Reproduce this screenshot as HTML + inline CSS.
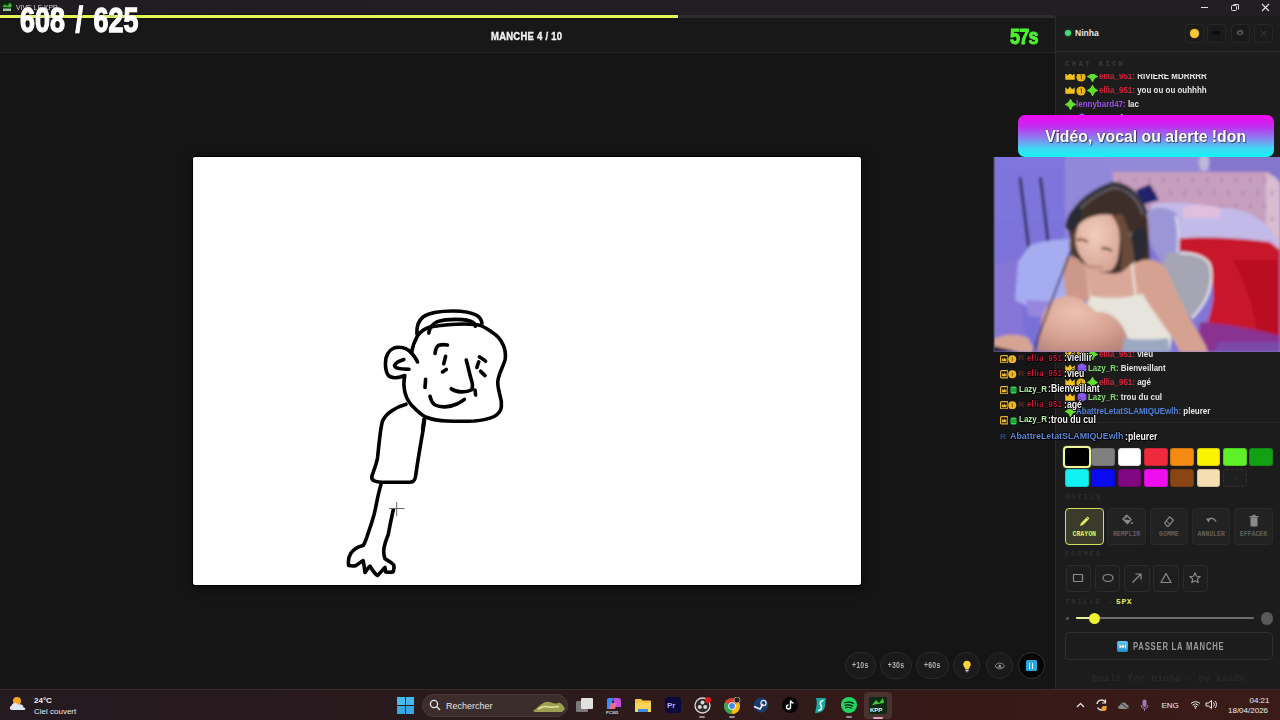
<!DOCTYPE html>
<html><head><meta charset="utf-8">
<style>
*{box-sizing:border-box;margin:0;padding:0}
html,body{width:1280px;height:720px;overflow:hidden;background:#151515;font-family:"Liberation Sans",sans-serif}
.a{position:absolute}
.t{position:absolute;white-space:pre;line-height:1}
</style></head>
<body>
<div class="a" style="left:0;top:0;width:1280px;height:720px;background:#151515"></div>

<!-- title bar -->
<div class="a" style="left:0;top:0;width:1280px;height:16px;background:linear-gradient(90deg,#1f1b1f,#221e24 40%,#211f21)"></div>
<svg class="a" style="left:1px;top:1px" width="12" height="11" viewBox="0 0 12 11"><rect width="12" height="11" rx="1" fill="#0c2410"/><path d="M1 6L4 3L6 5L9 1.5L11 4.5L10 6.5Z" fill="#3fae3a"/><rect x="2" y="7.5" width="8" height="2.5" fill="#cfe8cf" opacity=".8"/></svg>
<div class="t" style="left:15.6px;top:3.6px;font-size:8px;color:#d4d4d4;transform-origin:0 0;transform:scaleX(0.86)">VIVE LE KPP</div>
<!-- window controls -->
<div class="a" style="left:1201px;top:7px;width:7px;height:1.3px;background:#ddd"></div>
<div class="a" style="left:1232.5px;top:3.5px;width:6px;height:6px;border-top:1.1px solid #ddd;border-right:1.1px solid #ddd;border-radius:1.5px"></div><div class="a" style="left:1231px;top:5px;width:6px;height:6px;border:1.2px solid #ddd;border-radius:1.5px;background:#1f1d1f"></div>
<svg class="a" style="left:1261px;top:3px" width="9" height="9"><path d="M1 1L8 8M8 1L1 8" stroke="#e5e5e5" stroke-width="1.1"/></svg>

<!-- game area -->
<div class="a" style="left:0;top:16px;width:1055px;height:673px;background:#151515"></div>
<!-- header -->
<div class="a" style="left:0;top:17px;width:1055px;height:36px;background:#181818;border-bottom:1px solid #262626"></div>
<!-- progress track -->
<div class="a" style="left:0;top:15px;width:1055px;height:3px;background:#2c2c2c;border-top-right-radius:3px"></div>
<div class="a" style="left:0;top:15px;width:678px;height:3px;background:#e4f55a;box-shadow:0 0 2px #000"></div>
<div class="t" id="score" style="left:20px;top:2.5px;font-size:34.5px;font-weight:bold;color:#fff;transform-origin:0 0;transform:scaleX(0.78);word-spacing:4px;-webkit-text-stroke:1.3px #fff;text-shadow:0 1px 2px rgba(0,0,0,.6)">608 / 625</div>
<div class="t" id="manche" style="left:491px;top:31px;font-size:10.5px;font-weight:bold;color:#f0f0f0;letter-spacing:0.3px;transform-origin:0 0;transform:scaleX(0.9);-webkit-text-stroke:0.4px #f0f0f0">MANCHE 4 / 10</div>
<div class="t" id="timer" style="left:1009.5px;top:25.5px;font-size:22.5px;font-weight:bold;color:#4df22e;transform-origin:0 0;transform:scaleX(0.8);letter-spacing:-1px;-webkit-text-stroke:1px #4df22e">57s</div>

<!-- canvas -->
<div class="a" style="left:192px;top:156px;width:670px;height:430px;background:#000;border-radius:3px;box-shadow:0 2px 14px rgba(0,0,0,.45)"></div>
<div class="a" style="left:193px;top:157px;width:668px;height:428px;background:#fff;border-radius:2px"></div>

<svg class="a" style="left:0;top:0" width="1280" height="720"><g fill="none" stroke="#000" stroke-width="3.6" stroke-linecap="round" stroke-linejoin="round"><path d="M406,404.2 C396,407 386,413 382.5,421 C380,430 379,445 377.5,458 C376,466 373,472 371.7,477 C371.5,481 376,482.2 385,482.3 L410,482.3 C414,482 415.2,480 415.8,475 C417.5,462 420.5,445 423.1,430 C423.8,426 424.4,422 424.5,419.5"/><path d="M380.9,484.7 C378,494 376.5,504 374.3,513.7 C371.5,524 368.5,532 366.9,537 C365.5,541 364.5,544 363.1,545.5 C359,546.5 354,549 351,553 C348.5,557 348,562 348.75,565.6 C351,566 354,566.2 356,565.5 C358.5,564 361,561.5 363.1,560.6 C364,564 364.5,569 365,572.5 C366.5,570.5 368.5,567.5 370,566.25 C372,569.5 375,574 377.5,575.6 C380,573 383,569.5 385,567.5 C385.2,569 385.4,570.5 385.6,571.9 C388,572.3 391,572.2 393.1,571.9 C394,569.5 394.2,567 393.75,565 C391.5,562 387.5,560.5 385,558.75 C384,556 383.6,553 383.75,550.6 C384,545 386,540 388.1,535 C389.5,528 391,520 392.3,514.5 C392.7,512.5 393,511 393.3,509.8"/><path d="M417.4,336.1 C414.5,341 412.5,347 411.5,353 C408,349 403,347 398,347.2 C392,347.5 387.5,352 386,358 C385,364 385.5,371 388,375 C391,378.5 398,378.5 404.8,375.5 C404,379 403.8,382 403.9,385 C404.2,391 405,394 406.6,397.5 C409,402 410.5,404.5 412.9,406.6 C417,411 420.5,414.5 425.6,417 C432,419.5 440,420.8 447.3,421 C456,421.3 465,421.3 474.4,421 C482,420.5 489,419 494.2,416.5 C498.5,414 501,410.5 501.4,406.6 C502,401 500.5,397 499.6,393.9 C498.5,389 497.5,385.5 497.8,381.3 C498.5,374 503.5,366 505.1,359.6 C506,354 505,349 503.3,345.2 C500.5,339 496.5,335 492.4,332.5 C489,330 485.5,327.5 481.6,325.8 C474,323.5 465,323.8 456.3,324.2 C446,324.8 437,325.6 429.2,327.3 C424,329 420,332 417.4,336.1"/><path d="M403.8,359.5 C399,361 395.5,363 394.5,365.5 C395,367.5 398,368.5 401,368.8 C404,369 407,369.2 409,369.2"/><path d="M411.5,353 C414,356 416.5,359 417.5,362"/><path d="M416.9,334 C416.5,327 418,321 423,317 C430,312 442,311 452.7,311 C462,311 471,312 477,315.5 C480.5,318 481.9,321 481.9,323.5"/><path d="M428.8,332.9 C429.5,328 432,324 437,321.8 C443,319.8 450,319.4 456.3,319.4 C464,319.4 470,320.5 473.4,322.6 C475,324 475.5,325 475.3,326.2"/><path d="M435,353.5 C435.5,349.5 436.5,346.5 438.75,345.3 C441.5,344.5 445,344.6 447.5,345"/><path d="M445.6,356.3 C445,359 444.3,361.5 443.75,363.75"/><path d="M442.5,371.9 C443.8,371 445,370.2 446.25,369.4"/><path d="M479.4,356.9 C481.5,358.2 483.8,359.6 485.6,361.25"/><path d="M478.75,361.9 C478,363.8 477.4,365.6 476.9,367.5"/><path d="M480.6,371.25 C482,372.8 483.5,374.2 485,375.6"/><path d="M466.25,360 C467.5,365 468.8,370 470,375 C471,379 472.3,382 472.5,385 C472.6,387.5 472.2,389 471.25,390 C468.5,391.5 464.5,392 461.25,391.9 C457,391.8 453.5,390.5 451.25,388.75"/><path d="M475,390 C475.3,391.7 475.5,393.3 475.6,395"/><path d="M425.6,379.4 C425.4,382 425.2,385 425,387.5"/><path d="M430,396.25 C431,400 432.5,403.5 435,405 C438,406.5 441.5,407 445,406.9 C449.5,406.6 454,405.3 457.5,403.75 C460,402.5 462.5,401 464.4,399.4"/><path d="M424,419.3 C423.5,422 423,426 422.6,430"/></g><path d="M389,508.5H404.5M396.7,502V516" stroke="#666" stroke-width="1"/></svg>
<!-- right panel -->
<div class="a" style="left:1055px;top:16px;width:225px;height:673px;background:#1c1c1c;border-left:1px solid #2a2a2a"></div>

<!-- right header -->
<div class="a" style="left:1056px;top:51px;width:224px;height:1px;background:#2a2a2a"></div>
<div class="a" style="left:1064.5px;top:30px;width:6px;height:6px;border-radius:50%;background:#3ee07a;box-shadow:0 0 3px rgba(62,224,122,.5)"></div>
<div class="t" style="left:1075px;top:29px;font-size:8.5px;font-weight:bold;color:#e6e6e6">Ninha</div>
<div class="a" style="left:1185px;top:24px;width:19px;height:19px;border:1px solid #272727;border-radius:4px;background:#1a1a1a"></div>
<div class="a" style="left:1189.5px;top:28.5px;width:9px;height:9px;border-radius:50%;background:#f7c93a;box-shadow:0 0 2px #a06000"></div>
<div class="a" style="left:1207px;top:24px;width:19px;height:19px;border:1px solid #272727;border-radius:4px;background:#1a1a1a"></div>
<div class="a" style="left:1212px;top:31px;width:8px;height:4px;background:#0d0d0d"></div>
<div class="a" style="left:1230.5px;top:24px;width:19px;height:19px;border:1px solid #272727;border-radius:4px;background:#1a1a1a"></div>
<svg class="a" style="left:1235px;top:28px" width="10" height="10" viewBox="0 0 10 10"><path d="M5 1.2l1 1.1 1.5-.3.3 1.5 1.1 1-1.1 1-.3 1.5-1.5-.3-1 1.1-1-1.1-1.5.3-.3-1.5L1.1 5l1.1-1 .3-1.5 1.5.3z" fill="#555"/><circle cx="5" cy="5" r="1.3" fill="#1a1a1a"/></svg>
<div class="a" style="left:1254px;top:24px;width:19px;height:19px;border:1px solid #262626;border-radius:4px;background:#1b1b1b"></div>
<svg class="a" style="left:1259px;top:29px" width="9" height="9"><path d="M1.5 1.5L7.5 7.5M7.5 1.5L1.5 7.5" stroke="#3a3a3a" stroke-width="1"/></svg>

<!-- chat -->
<div class="t" style="left:1065px;top:61.3px;font-size:7.5px;font-family:'Liberation Mono';font-weight:bold;color:#3a3a3a;letter-spacing:2.2px">CHAT KICK</div>
<div class="a" style="left:0;top:74px;width:1280px;height:348px;overflow:hidden;clip-path:inset(0 0 0 1056px)"><div class="a" style="left:0;top:-74px"><svg class="a" style="left:1064.5px;top:72.1px" width="10" height="8" viewBox="0 0 10 8"><path d="M0.3 1.2L2.8 3.4L5 0.5L7.2 3.4L9.7 1.2V7.8H0.3Z" fill="#f5c21b"/></svg>
<svg class="a" style="left:1075.8px;top:71.6px" width="10" height="10" viewBox="0 0 10 10"><circle cx="5" cy="5" r="4.6" fill="#f2c01c"/><circle cx="5" cy="5" r="3.3" fill="none" stroke="#c99410" stroke-width=".6"/><path d="M4.3 3.2L5.4 2.8V7.2" stroke="#6a4a00" stroke-width="1" fill="none"/></svg>
<svg class="a" style="left:1087.0px;top:71.1px" width="11" height="11" viewBox="0 0 11 11"><path d="M5.5 0.6Q6.6 4.4 10.4 5.5Q6.6 6.6 5.5 10.4Q4.4 6.6 0.6 5.5Q4.4 4.4 5.5 0.6Z" fill="#62e02c" stroke="#62e02c" stroke-width="1.3" stroke-linejoin="round"/></svg>
<div class="t" style="left:1099.3px;top:71.1px;font-size:9.5px;font-weight:bold;color:#d3213d;transform-origin:0 0;transform:scaleX(0.84)">ellia_951: <span style="color:#e6e6e6">RIVIERE MDRRRR</span></div>
<svg class="a" style="left:1064.5px;top:86.0px" width="10" height="8" viewBox="0 0 10 8"><path d="M0.3 1.2L2.8 3.4L5 0.5L7.2 3.4L9.7 1.2V7.8H0.3Z" fill="#f5c21b"/></svg>
<svg class="a" style="left:1075.8px;top:85.5px" width="10" height="10" viewBox="0 0 10 10"><circle cx="5" cy="5" r="4.6" fill="#f2c01c"/><circle cx="5" cy="5" r="3.3" fill="none" stroke="#c99410" stroke-width=".6"/><path d="M4.3 3.2L5.4 2.8V7.2" stroke="#6a4a00" stroke-width="1" fill="none"/></svg>
<svg class="a" style="left:1087.0px;top:85.0px" width="11" height="11" viewBox="0 0 11 11"><path d="M5.5 0.6Q6.6 4.4 10.4 5.5Q6.6 6.6 5.5 10.4Q4.4 6.6 0.6 5.5Q4.4 4.4 5.5 0.6Z" fill="#62e02c" stroke="#62e02c" stroke-width="1.3" stroke-linejoin="round"/></svg>
<div class="t" style="left:1099.3px;top:85.0px;font-size:9.5px;font-weight:bold;color:#d3213d;transform-origin:0 0;transform:scaleX(0.84)">ellia_951: <span style="color:#e6e6e6">you ou ou ouhhhh</span></div>
<svg class="a" style="left:1064.5px;top:99.0px" width="11" height="11" viewBox="0 0 11 11"><path d="M5.5 0.6Q6.6 4.4 10.4 5.5Q6.6 6.6 5.5 10.4Q4.4 6.6 0.6 5.5Q4.4 4.4 5.5 0.6Z" fill="#62e02c" stroke="#62e02c" stroke-width="1.3" stroke-linejoin="round"/></svg>
<div class="t" style="left:1076.4px;top:99.0px;font-size:9.5px;font-weight:bold;color:#9a4fe6;transform-origin:0 0;transform:scaleX(0.84)">lennybard47: <span style="color:#e6e6e6">lac</span></div>
<svg class="a" style="left:1064.5px;top:113.9px" width="10" height="8" viewBox="0 0 10 8"><path d="M0.3 1.2L2.8 3.4L5 0.5L7.2 3.4L9.7 1.2V7.8H0.3Z" fill="#f5c21b"/></svg>
<svg class="a" style="left:1076.5px;top:113.4px" width="10" height="10" viewBox="0 0 10 10"><path d="M5 0.3L9.3 2.6V7.4L5 9.7L0.7 7.4V2.6Z" fill="#8a5cf0"/><path d="M0.7 4.5L5 6.5L9.3 4.5" stroke="#6a40c8" stroke-width=".7" fill="none"/></svg>
<div class="t" style="left:1087.5px;top:112.9px;font-size:9.5px;font-weight:bold;color:#7fdc6e;transform-origin:0 0;transform:scaleX(0.84)">Lazy_R: <span style="color:#e6e6e6">lac</span></div>
<svg class="a" style="left:1064.5px;top:350.0px" width="10" height="8" viewBox="0 0 10 8"><path d="M0.3 1.2L2.8 3.4L5 0.5L7.2 3.4L9.7 1.2V7.8H0.3Z" fill="#f5c21b"/></svg>
<svg class="a" style="left:1075.8px;top:349.5px" width="10" height="10" viewBox="0 0 10 10"><circle cx="5" cy="5" r="4.6" fill="#f2c01c"/><circle cx="5" cy="5" r="3.3" fill="none" stroke="#c99410" stroke-width=".6"/><path d="M4.3 3.2L5.4 2.8V7.2" stroke="#6a4a00" stroke-width="1" fill="none"/></svg>
<svg class="a" style="left:1087.0px;top:349.0px" width="11" height="11" viewBox="0 0 11 11"><path d="M5.5 0.6Q6.6 4.4 10.4 5.5Q6.6 6.6 5.5 10.4Q4.4 6.6 0.6 5.5Q4.4 4.4 5.5 0.6Z" fill="#62e02c" stroke="#62e02c" stroke-width="1.3" stroke-linejoin="round"/></svg>
<div class="t" style="left:1099.3px;top:349.0px;font-size:9.5px;font-weight:bold;color:#d3213d;transform-origin:0 0;transform:scaleX(0.84)">ellia_951: <span style="color:#e6e6e6">vieu</span></div>
<svg class="a" style="left:1064.5px;top:363.8px" width="10" height="8" viewBox="0 0 10 8"><path d="M0.3 1.2L2.8 3.4L5 0.5L7.2 3.4L9.7 1.2V7.8H0.3Z" fill="#f5c21b"/></svg>
<svg class="a" style="left:1076.5px;top:363.3px" width="10" height="10" viewBox="0 0 10 10"><path d="M5 0.3L9.3 2.6V7.4L5 9.7L0.7 7.4V2.6Z" fill="#8a5cf0"/><path d="M0.7 4.5L5 6.5L9.3 4.5" stroke="#6a40c8" stroke-width=".7" fill="none"/></svg>
<div class="t" style="left:1087.5px;top:362.8px;font-size:9.5px;font-weight:bold;color:#7fdc6e;transform-origin:0 0;transform:scaleX(0.84)">Lazy_R: <span style="color:#e6e6e6">Bienveillant</span></div>
<svg class="a" style="left:1064.5px;top:378.3px" width="10" height="8" viewBox="0 0 10 8"><path d="M0.3 1.2L2.8 3.4L5 0.5L7.2 3.4L9.7 1.2V7.8H0.3Z" fill="#f5c21b"/></svg>
<svg class="a" style="left:1075.8px;top:377.8px" width="10" height="10" viewBox="0 0 10 10"><circle cx="5" cy="5" r="4.6" fill="#f2c01c"/><circle cx="5" cy="5" r="3.3" fill="none" stroke="#c99410" stroke-width=".6"/><path d="M4.3 3.2L5.4 2.8V7.2" stroke="#6a4a00" stroke-width="1" fill="none"/></svg>
<svg class="a" style="left:1087.0px;top:377.3px" width="11" height="11" viewBox="0 0 11 11"><path d="M5.5 0.6Q6.6 4.4 10.4 5.5Q6.6 6.6 5.5 10.4Q4.4 6.6 0.6 5.5Q4.4 4.4 5.5 0.6Z" fill="#62e02c" stroke="#62e02c" stroke-width="1.3" stroke-linejoin="round"/></svg>
<div class="t" style="left:1099.3px;top:377.3px;font-size:9.5px;font-weight:bold;color:#d3213d;transform-origin:0 0;transform:scaleX(0.84)">ellia_951: <span style="color:#e6e6e6">agé</span></div>
<svg class="a" style="left:1064.5px;top:392.7px" width="10" height="8" viewBox="0 0 10 8"><path d="M0.3 1.2L2.8 3.4L5 0.5L7.2 3.4L9.7 1.2V7.8H0.3Z" fill="#f5c21b"/></svg>
<svg class="a" style="left:1076.5px;top:392.2px" width="10" height="10" viewBox="0 0 10 10"><path d="M5 0.3L9.3 2.6V7.4L5 9.7L0.7 7.4V2.6Z" fill="#8a5cf0"/><path d="M0.7 4.5L5 6.5L9.3 4.5" stroke="#6a40c8" stroke-width=".7" fill="none"/></svg>
<div class="t" style="left:1087.5px;top:391.7px;font-size:9.5px;font-weight:bold;color:#7fdc6e;transform-origin:0 0;transform:scaleX(0.84)">Lazy_R: <span style="color:#e6e6e6">trou du cul</span></div>
<svg class="a" style="left:1064.5px;top:406.2px" width="11" height="11" viewBox="0 0 11 11"><path d="M5.5 0.6Q6.6 4.4 10.4 5.5Q6.6 6.6 5.5 10.4Q4.4 6.6 0.6 5.5Q4.4 4.4 5.5 0.6Z" fill="#62e02c" stroke="#62e02c" stroke-width="1.3" stroke-linejoin="round"/></svg>
<div class="t" style="left:1076px;top:406.2px;font-size:9.5px;font-weight:bold;color:#4f7fd6;transform-origin:0 0;transform:scaleX(0.84)">AbattreLetatSLAMIQUEwlh: <span style="color:#e6e6e6">pleurer</span></div></div></div>
<div class="a" style="left:1056px;top:422px;width:224px;height:1px;background:#262626"></div>

<svg class="a" style="left:993px;top:157px" width="287" height="195" viewBox="993 157 287 195"><defs><filter id="bl" x="-5%" y="-5%" width="110%" height="110%"><feGaussianBlur stdDeviation="1.4"/></filter><radialGradient id="knee" cx=".4" cy=".3" r=".8"><stop offset="0" stop-color="#ecc0b0"/><stop offset=".55" stop-color="#d8a494"/><stop offset="1" stop-color="#b88478"/></radialGradient><radialGradient id="face" cx=".45" cy=".35" r=".7"><stop offset="0" stop-color="#f2cdbd"/><stop offset="1" stop-color="#d5a493"/></radialGradient><linearGradient id="wallL" x1="0" y1="0" x2="0" y2="1"><stop offset="0" stop-color="#7e76dc"/><stop offset="1" stop-color="#786ed6"/></linearGradient><clipPath id="wc"><rect x="993" y="157" width="287" height="195"/></clipPath></defs><g clip-path="url(#wc)"><g filter="url(#bl)"><rect x="985" y="150" width="300" height="210" fill="#8276d6"/><rect x="985" y="150" width="80" height="210" fill="url(#wallL)"/><rect x="1065" y="150" width="50" height="120" fill="#9288da"/><rect x="1110" y="150" width="100" height="24" fill="#9488d8"/><rect x="1210" y="150" width="75" height="24" fill="#8476cc"/><ellipse cx="1204" cy="163" rx="5" ry="8" fill="#c0b8d8"/><path d="M985 268L1018 258L1024 330L1030 352H985Z" fill="#8676d6"/><path d="M1020 177.3L1029.6 254.5M1040.4 177.3L1048.5 245" stroke="#0a0a24" stroke-width="2.4"/><path d="M1113 172H1270L1272 240H1113Z" fill="#c69ebe"/><path d="M1266 174C1272 174 1278 178 1280 184V262L1266 258Z" fill="#d8bcd0"/><path d="M1120.0 178L1120.0 182" stroke="#9a6e98" stroke-width="1.2"/><path d="M1134.5 178L1134.5 182" stroke="#9a6e98" stroke-width="1.2"/><path d="M1149.0 178L1149.0 182" stroke="#9a6e98" stroke-width="1.2"/><path d="M1163.5 178L1163.5 182" stroke="#9a6e98" stroke-width="1.2"/><path d="M1178.0 178L1178.0 182" stroke="#9a6e98" stroke-width="1.2"/><path d="M1192.5 178L1192.5 182" stroke="#9a6e98" stroke-width="1.2"/><path d="M1207.0 178L1207.0 182" stroke="#9a6e98" stroke-width="1.2"/><path d="M1221.5 178L1221.5 182" stroke="#9a6e98" stroke-width="1.2"/><path d="M1236.0 178L1236.0 182" stroke="#9a6e98" stroke-width="1.2"/><path d="M1250.5 178L1250.5 182" stroke="#9a6e98" stroke-width="1.2"/><path d="M1265.0 178L1265.0 182" stroke="#9a6e98" stroke-width="1.2"/><path d="M1127.0 191L1127.0 195" stroke="#9a6e98" stroke-width="1.2"/><path d="M1141.5 191L1141.5 195" stroke="#9a6e98" stroke-width="1.2"/><path d="M1156.0 191L1156.0 195" stroke="#9a6e98" stroke-width="1.2"/><path d="M1170.5 191L1170.5 195" stroke="#9a6e98" stroke-width="1.2"/><path d="M1185.0 191L1185.0 195" stroke="#9a6e98" stroke-width="1.2"/><path d="M1199.5 191L1199.5 195" stroke="#9a6e98" stroke-width="1.2"/><path d="M1214.0 191L1214.0 195" stroke="#9a6e98" stroke-width="1.2"/><path d="M1228.5 191L1228.5 195" stroke="#9a6e98" stroke-width="1.2"/><path d="M1243.0 191L1243.0 195" stroke="#9a6e98" stroke-width="1.2"/><path d="M1257.5 191L1257.5 195" stroke="#9a6e98" stroke-width="1.2"/><path d="M1272.0 191L1272.0 195" stroke="#9a6e98" stroke-width="1.2"/><path d="M1120.0 204L1120.0 208" stroke="#9a6e98" stroke-width="1.2"/><path d="M1134.5 204L1134.5 208" stroke="#9a6e98" stroke-width="1.2"/><path d="M1149.0 204L1149.0 208" stroke="#9a6e98" stroke-width="1.2"/><path d="M1163.5 204L1163.5 208" stroke="#9a6e98" stroke-width="1.2"/><path d="M1178.0 204L1178.0 208" stroke="#9a6e98" stroke-width="1.2"/><path d="M1192.5 204L1192.5 208" stroke="#9a6e98" stroke-width="1.2"/><path d="M1207.0 204L1207.0 208" stroke="#9a6e98" stroke-width="1.2"/><path d="M1221.5 204L1221.5 208" stroke="#9a6e98" stroke-width="1.2"/><path d="M1236.0 204L1236.0 208" stroke="#9a6e98" stroke-width="1.2"/><path d="M1250.5 204L1250.5 208" stroke="#9a6e98" stroke-width="1.2"/><path d="M1265.0 204L1265.0 208" stroke="#9a6e98" stroke-width="1.2"/><path d="M1127.0 217L1127.0 221" stroke="#9a6e98" stroke-width="1.2"/><path d="M1141.5 217L1141.5 221" stroke="#9a6e98" stroke-width="1.2"/><path d="M1156.0 217L1156.0 221" stroke="#9a6e98" stroke-width="1.2"/><path d="M1170.5 217L1170.5 221" stroke="#9a6e98" stroke-width="1.2"/><path d="M1185.0 217L1185.0 221" stroke="#9a6e98" stroke-width="1.2"/><path d="M1199.5 217L1199.5 221" stroke="#9a6e98" stroke-width="1.2"/><path d="M1214.0 217L1214.0 221" stroke="#9a6e98" stroke-width="1.2"/><path d="M1228.5 217L1228.5 221" stroke="#9a6e98" stroke-width="1.2"/><path d="M1243.0 217L1243.0 221" stroke="#9a6e98" stroke-width="1.2"/><path d="M1257.5 217L1257.5 221" stroke="#9a6e98" stroke-width="1.2"/><path d="M1272.0 217L1272.0 221" stroke="#9a6e98" stroke-width="1.2"/><path d="M1136 190L1150 184L1159 200L1142 205Z" fill="#22246a"/><path d="M1150 205C1170 200 1200 204 1240 210C1260 216 1275 230 1278 246L1176 250L1152 230Z" fill="#c2bae8"/><path d="M1182 208C1192 203 1210 204 1222 210L1218 218H1184Z" fill="#e0bede"/><path d="M1176 239C1200 236 1240 238 1270 242L1280 250V352H1196C1202 338 1210 320 1213 300C1214 282 1210 262 1195 254L1178 250Z" fill="#c8162a"/><path d="M1232 260C1245 280 1255 310 1260 352H1280V260Z" fill="#b41022" opacity=".7"/><path d="M1200 322C1230 324 1260 330 1280 336V352H1196Z" fill="#8a3090"/><path d="M1218 342H1280V352H1214Z" fill="#7a48a8"/><path d="M1030 245C1045 240 1065 238 1082 240L1086 300C1070 306 1045 310 1030 308L1015 300L1018 262Z" fill="#a6acf0"/><path d="M1026 300L1056 302L1058 318L1028 316Z" fill="#9686dc"/><path d="M1148 210C1158 206 1172 208 1177 214C1180 228 1180 246 1178 258L1162 264L1150 244Z" fill="#9c96d6"/><path d="M1176 216C1179 230 1179 246 1177 258" stroke="#e6e6f2" stroke-width="1.8" fill="none"/><path d="M1168 253C1185 252 1202 254 1209 262C1214 272 1212 288 1206 300C1200 310 1195 316 1192 318L1172 300L1162 266Z" fill="#a6a6b2"/><path d="M1180 253C1196 253 1206 257 1210 265C1213 276 1211 290 1205 301C1200 309 1196 314 1192 318" stroke="#ececf4" stroke-width="2" fill="none"/><path d="M1166 286L1180 300L1190 330L1178 334Z" fill="#3e3650"/><path d="M1068 226C1072 206 1088 190 1110 186C1132 186 1146 200 1148 222L1150 262C1146 274 1136 278 1126 276L1108 274C1094 274 1080 266 1072 252Z" fill="#3e2e2a"/><path d="M1067 227C1072 208 1088 193 1112 184C1128 184 1140 196 1146 214" fill="none" stroke="#34343c" stroke-width="4.5"/><path d="M1070 228C1075 210 1090 197 1112 188C1127 188 1138 199 1143 215" fill="none" stroke="#7a7a82" stroke-width="1.2"/><ellipse cx="1074" cy="219" rx="6.5" ry="13" fill="#2a2a32" transform="rotate(25 1074 219)"/><ellipse cx="1138" cy="245" rx="9" ry="18" fill="#2a2a32" transform="rotate(12 1138 245)"/><path d="M1131 232C1128 245 1127 256 1130 264" stroke="#8a8a92" stroke-width="1.2" fill="none"/><path d="M1078 226C1084 217 1100 213 1112 215C1119 222 1121 236 1119 250C1118 260 1116 268 1110 271C1102 273 1094 272 1088 266C1080 258 1075 248 1075.5 238C1076 233 1077 229 1078 226Z" fill="url(#face)"/><path d="M1112 216C1122 228 1124 250 1120 272L1134 276C1136 256 1132 234 1122 214Z" fill="#6a4c3a"/><path d="M1078 226C1073 236 1072 250 1078 262L1071 256C1068 244 1070 232 1078 226Z" fill="#5a4234"/><path d="M1077 240C1081 239 1085 240 1088 242M1101 248C1105 248 1109 249 1112 251" stroke="#3a2420" stroke-width="1.9" fill="none"/><path d="M1090 266C1094 267 1099 268 1103 267" stroke="#b07068" stroke-width="1.4" fill="none"/><path d="M1082 262C1092 272 1110 276 1122 272L1134 262L1160 266L1168 295L1090 300Z" fill="#d9a898"/><path d="M1086 294C1100 300 1135 300 1165 286L1172 330L1170 352H1122C1110 345 1098 330 1090 318Z" fill="#e6e4dc"/><path d="M1085 272L1090 300M1132 264L1136 300" stroke="#eeece6" stroke-width="1.8"/><path d="M1138 262C1150 256 1163 262 1168 272C1175 290 1186 312 1198 332C1204 342 1207 348 1208 352H1180C1176 344 1170 334 1164 326C1156 314 1146 302 1142 292C1136 282 1134 270 1138 262Z" fill="#d5a292"/><path d="M1066 258C1072 254 1082 258 1086 272L1090 300L1068 304C1064 290 1062 270 1066 258Z" fill="#cc9888"/><path d="M1041 326C1042 306 1055 296 1068 296C1080 296 1088 304 1096 312C1110 310 1124 322 1128 340L1130 352H1038C1038 342 1040 334 1041 326Z" fill="url(#knee)"/><path d="M1124 338C1135 340 1155 340 1168 338L1170 352H1122Z" fill="#9aa8c0"/><path d="M993 340C1002 334 1016 333 1028 338L1036 352H993Z" fill="#d6a494"/><path d="M993 346L1020 352H993Z" fill="#15151a"/><path d="M1071.5 249C1062 275 1045 315 1033.6 352" stroke="#121230" stroke-width="1.6" fill="none"/></g></g><rect x="993" y="157" width="1.5" height="195" fill="#3a3a3a"/></svg>
<div class="a" style="left:1018.3px;top:115.2px;width:255.3px;height:41.8px;border-radius:7px;background:linear-gradient(180deg,#f006ee 0%,#c030f0 28%,#8a80f0 55%,#40d8f4 80%,#12f4f4 100%)"></div><div class="t" style="left:1018.3px;width:255.3px;text-align:center;top:128px;font-size:17px;font-weight:bold;color:#fff;transform-origin:50% 0;transform:scaleX(0.93);text-shadow:1px 1px 1px rgba(0,0,0,.55),0 0 2px rgba(0,0,0,.3)">Vidéo, vocal ou alerte !don</div>
<svg class="a" style="left:999.8px;top:354.6px" width="8.5" height="8.5" viewBox="0 0 8.5 8.5"><rect x=".6" y=".6" width="7.3" height="7.3" rx="1" fill="#1a1200" stroke="#e0b230" stroke-width="1.2"/><path d="M2 6.2L2.2 3L3.4 4.2L4.25 2.4L5.1 4.2L6.3 3L6.5 6.2Z" fill="#e8b830"/></svg>
<svg class="a" style="left:1008.4px;top:354.6px" width="8.5" height="8.5" viewBox="0 0 8.5 8.5"><circle cx="4.25" cy="4.25" r="4" fill="#f0b820"/><path d="M4.25 2.2V6.3" stroke="#8a5a00" stroke-width="1"/></svg>
<div class="t" style="left:1018px;top:354.3px;font-size:8px;font-weight:bold;color:#5a2a1a">R</div>
<div class="t" style="left:1027.3px;top:353.6px;font-size:9.3px;font-weight:bold;color:#c8163e;letter-spacing:0.6px;transform-origin:0 0;transform:scaleX(0.8);text-shadow:1px 0 0 #000,-1px 0 0 #000,0 1px 0 #000,0 -1px 0 #000,1px 1px 1px #000">ellia_951</div><div class="t" style="left:1064.3px;top:353.2px;font-size:10px;font-weight:bold;color:#f4f4f4;transform-origin:0 0;transform:scaleX(0.87);text-shadow:1px 0 0 #000,-1px 0 0 #000,0 1px 0 #000,0 -1px 0 #000,1px 1px 1px #000">:vieillir</div>
<svg class="a" style="left:999.8px;top:370.2px" width="8.5" height="8.5" viewBox="0 0 8.5 8.5"><rect x=".6" y=".6" width="7.3" height="7.3" rx="1" fill="#1a1200" stroke="#e0b230" stroke-width="1.2"/><path d="M2 6.2L2.2 3L3.4 4.2L4.25 2.4L5.1 4.2L6.3 3L6.5 6.2Z" fill="#e8b830"/></svg>
<svg class="a" style="left:1008.4px;top:370.2px" width="8.5" height="8.5" viewBox="0 0 8.5 8.5"><circle cx="4.25" cy="4.25" r="4" fill="#f0b820"/><path d="M4.25 2.2V6.3" stroke="#8a5a00" stroke-width="1"/></svg>
<div class="t" style="left:1018px;top:369.9px;font-size:8px;font-weight:bold;color:#5a2a1a">R</div>
<div class="t" style="left:1027.3px;top:369.2px;font-size:9.3px;font-weight:bold;color:#c8163e;letter-spacing:0.6px;transform-origin:0 0;transform:scaleX(0.8);text-shadow:1px 0 0 #000,-1px 0 0 #000,0 1px 0 #000,0 -1px 0 #000,1px 1px 1px #000">ellia_951</div><div class="t" style="left:1064.3px;top:368.79999999999995px;font-size:10px;font-weight:bold;color:#f4f4f4;transform-origin:0 0;transform:scaleX(0.87);text-shadow:1px 0 0 #000,-1px 0 0 #000,0 1px 0 #000,0 -1px 0 #000,1px 1px 1px #000">:vieu</div>
<svg class="a" style="left:999.8px;top:385.6px" width="8.5" height="8.5" viewBox="0 0 8.5 8.5"><rect x=".6" y=".6" width="7.3" height="7.3" rx="1" fill="#1a1200" stroke="#e0b230" stroke-width="1.2"/><path d="M2 6.2L2.2 3L3.4 4.2L4.25 2.4L5.1 4.2L6.3 3L6.5 6.2Z" fill="#e8b830"/></svg>
<svg class="a" style="left:1009.5px;top:385.8px" width="7" height="8" viewBox="0 0 7 8"><rect x="0.5" y="0.5" width="6" height="7" rx="1.5" fill="#2ad84a"/><path d="M1 3H6M1 5H6" stroke="#0a5a1a" stroke-width=".8"/></svg>
<div class="t" style="left:1018.5px;top:384.6px;font-size:9.3px;font-weight:bold;color:#b4f0a6;letter-spacing:0px;transform-origin:0 0;transform:scaleX(0.86);text-shadow:1px 0 0 #000,-1px 0 0 #000,0 1px 0 #000,0 -1px 0 #000,1px 1px 1px #000">Lazy_R</div><div class="t" style="left:1048px;top:384.2px;font-size:10px;font-weight:bold;color:#f4f4f4;transform-origin:0 0;transform:scaleX(0.87);text-shadow:1px 0 0 #000,-1px 0 0 #000,0 1px 0 #000,0 -1px 0 #000,1px 1px 1px #000">:Bienveillant</div>
<svg class="a" style="left:999.8px;top:400.90000000000003px" width="8.5" height="8.5" viewBox="0 0 8.5 8.5"><rect x=".6" y=".6" width="7.3" height="7.3" rx="1" fill="#1a1200" stroke="#e0b230" stroke-width="1.2"/><path d="M2 6.2L2.2 3L3.4 4.2L4.25 2.4L5.1 4.2L6.3 3L6.5 6.2Z" fill="#e8b830"/></svg>
<svg class="a" style="left:1008.4px;top:400.90000000000003px" width="8.5" height="8.5" viewBox="0 0 8.5 8.5"><circle cx="4.25" cy="4.25" r="4" fill="#f0b820"/><path d="M4.25 2.2V6.3" stroke="#8a5a00" stroke-width="1"/></svg>
<div class="t" style="left:1018px;top:400.6px;font-size:8px;font-weight:bold;color:#5a2a1a">R</div>
<div class="t" style="left:1027.3px;top:399.90000000000003px;font-size:9.3px;font-weight:bold;color:#c8163e;letter-spacing:0.6px;transform-origin:0 0;transform:scaleX(0.8);text-shadow:1px 0 0 #000,-1px 0 0 #000,0 1px 0 #000,0 -1px 0 #000,1px 1px 1px #000">ellia_951</div><div class="t" style="left:1064.3px;top:399.5px;font-size:10px;font-weight:bold;color:#f4f4f4;transform-origin:0 0;transform:scaleX(0.87);text-shadow:1px 0 0 #000,-1px 0 0 #000,0 1px 0 #000,0 -1px 0 #000,1px 1px 1px #000">:agé</div>
<svg class="a" style="left:999.8px;top:416.40000000000003px" width="8.5" height="8.5" viewBox="0 0 8.5 8.5"><rect x=".6" y=".6" width="7.3" height="7.3" rx="1" fill="#1a1200" stroke="#e0b230" stroke-width="1.2"/><path d="M2 6.2L2.2 3L3.4 4.2L4.25 2.4L5.1 4.2L6.3 3L6.5 6.2Z" fill="#e8b830"/></svg>
<svg class="a" style="left:1009.5px;top:416.6px" width="7" height="8" viewBox="0 0 7 8"><rect x="0.5" y="0.5" width="6" height="7" rx="1.5" fill="#2ad84a"/><path d="M1 3H6M1 5H6" stroke="#0a5a1a" stroke-width=".8"/></svg>
<div class="t" style="left:1018.5px;top:415.40000000000003px;font-size:9.3px;font-weight:bold;color:#b4f0a6;letter-spacing:0px;transform-origin:0 0;transform:scaleX(0.86);text-shadow:1px 0 0 #000,-1px 0 0 #000,0 1px 0 #000,0 -1px 0 #000,1px 1px 1px #000">Lazy_R</div><div class="t" style="left:1048px;top:415.0px;font-size:10px;font-weight:bold;color:#f4f4f4;transform-origin:0 0;transform:scaleX(0.87);text-shadow:1px 0 0 #000,-1px 0 0 #000,0 1px 0 #000,0 -1px 0 #000,1px 1px 1px #000">:trou du cul</div>
<div class="t" style="left:1000.2px;top:433.1px;font-size:8px;font-weight:bold;color:#2a4a7a">R</div>
<div class="t" style="left:1010px;top:432.40000000000003px;font-size:9.3px;font-weight:bold;color:#5888d4;letter-spacing:0px;transform-origin:0 0;transform:scaleX(0.95);text-shadow:1px 0 0 #000,-1px 0 0 #000,0 1px 0 #000,0 -1px 0 #000,1px 1px 1px #000">AbattreLetatSLAMIQUEwlh</div><div class="t" style="left:1124.5px;top:432.0px;font-size:10px;font-weight:bold;color:#f4f4f4;transform-origin:0 0;transform:scaleX(0.87);text-shadow:1px 0 0 #000,-1px 0 0 #000,0 1px 0 #000,0 -1px 0 #000,1px 1px 1px #000">:pleurer</div>
<!-- palette -->
<div class="a" style="left:1063.0px;top:446px;width:28px;height:22px;border:2px solid #eef59a;border-radius:4px;background:#000;box-shadow:0 0 2px rgba(230,240,120,.4)"></div>
<div class="a" style="left:1091.35px;top:448px;width:23.5px;height:18px;border-radius:3px;background:#808080;box-shadow:inset 0 0 0 1px rgba(0,0,0,.15);"></div>
<div class="a" style="left:1117.7px;top:448px;width:23.5px;height:18px;border-radius:3px;background:#ffffff;border:1px solid #ddd;"></div>
<div class="a" style="left:1144.05px;top:448px;width:23.5px;height:18px;border-radius:3px;background:#ee2a3c;box-shadow:inset 0 0 0 1px rgba(0,0,0,.15);"></div>
<div class="a" style="left:1170.4px;top:448px;width:23.5px;height:18px;border-radius:3px;background:#f58a12;box-shadow:inset 0 0 0 1px rgba(0,0,0,.15);"></div>
<div class="a" style="left:1196.75px;top:448px;width:23.5px;height:18px;border-radius:3px;background:#fbf400;box-shadow:inset 0 0 0 1px rgba(0,0,0,.15);"></div>
<div class="a" style="left:1223.1px;top:448px;width:23.5px;height:18px;border-radius:3px;background:#5ef128;box-shadow:inset 0 0 0 1px rgba(0,0,0,.15);"></div>
<div class="a" style="left:1249.45px;top:448px;width:23.5px;height:18px;border-radius:3px;background:#14a014;box-shadow:inset 0 0 0 1px rgba(0,0,0,.15);"></div>
<div class="a" style="left:1065.0px;top:469px;width:23.5px;height:18px;border-radius:3px;background:#12f2f2;box-shadow:inset 0 0 0 1px rgba(0,0,0,.15);"></div>
<div class="a" style="left:1091.35px;top:469px;width:23.5px;height:18px;border-radius:3px;background:#0a0af0;box-shadow:inset 0 0 0 1px rgba(0,0,0,.15);"></div>
<div class="a" style="left:1117.7px;top:469px;width:23.5px;height:18px;border-radius:3px;background:#80077f;box-shadow:inset 0 0 0 1px rgba(0,0,0,.15);"></div>
<div class="a" style="left:1144.05px;top:469px;width:23.5px;height:18px;border-radius:3px;background:#f00ef0;box-shadow:inset 0 0 0 1px rgba(0,0,0,.15);"></div>
<div class="a" style="left:1170.4px;top:469px;width:23.5px;height:18px;border-radius:3px;background:#8a4514;box-shadow:inset 0 0 0 1px rgba(0,0,0,.15);"></div>
<div class="a" style="left:1196.75px;top:469px;width:23.5px;height:18px;border-radius:3px;background:#f4deb2;box-shadow:inset 0 0 0 1px rgba(0,0,0,.15);"></div>
<div class="a" style="left:1223.1px;top:469px;width:24px;height:18px;border:1px dashed #333;border-radius:3px;background:#1f1f1f"></div>
<div class="a" style="left:1234.6px;top:477.5px;width:1px;height:1px;background:#555"></div>
<div class="t" style="left:1065px;top:493.5px;font-size:7px;font-family:'Liberation Mono';color:#363636;letter-spacing:2.0px">OUTILS</div>
<div class="a" style="left:1065.0px;top:508px;width:38.5px;height:36.5px;border:1.5px solid #d4e05a;border-radius:4px;background:#3a3b2a"></div>
<svg class="a" style="left:1077.5px;top:514px" width="14" height="14" viewBox="0 0 14 14"><path d="M2 12L3 9L9.5 2.5L11.5 4.5L5 11Z" fill="#e3f05a"/><path d="M8.5 3.5l2 2" stroke="#3b3d26" stroke-width=".7"/></svg>
<div class="t" style="left:1065.0px;width:38.5px;text-align:center;top:532px;font-size:6.5px;font-weight:bold;font-family:'Liberation Mono';color:#e3f05a;letter-spacing:0px">CRAYON</div>
<div class="a" style="left:1107.3px;top:508px;width:38.5px;height:36.5px;border:1px solid #2a2a2a;border-radius:4px;background:#222222"></div>
<svg class="a" style="left:1119.8px;top:514px" width="14" height="14" viewBox="0 0 14 14"><path d="M3 5L7 1.5L11 5.5L7.5 9.5Z" fill="none" stroke="#8a8a8a" stroke-width="1.4"/><path d="M3.2 5.5L7.5 9.5L10.5 6Z" fill="#8a8a8a"/><circle cx="12" cy="9" r="1" fill="#8a8a8a"/><path d="M5 1L6.5 4" stroke="#8a8a8a" stroke-width="1"/></svg>
<div class="t" style="left:1107.3px;width:38.5px;text-align:center;top:532px;font-size:6.5px;font-weight:bold;font-family:'Liberation Mono';color:#5e5e5e;letter-spacing:0px">REMPLIR</div>
<div class="a" style="left:1149.6px;top:508px;width:38.5px;height:36.5px;border:1px solid #2a2a2a;border-radius:4px;background:#222222"></div>
<svg class="a" style="left:1162.1px;top:514px" width="14" height="14" viewBox="0 0 14 14"><path d="M2.5 8.5L8 3L11.5 6.5L6 12H4.5Z" fill="none" stroke="#8a8a8a" stroke-width="1.2" transform="rotate(-5 7 7)"/><path d="M4.5 7L8 10.5" stroke="#8a8a8a" stroke-width="1"/></svg>
<div class="t" style="left:1149.6px;width:38.5px;text-align:center;top:532px;font-size:6.5px;font-weight:bold;font-family:'Liberation Mono';color:#5e5e5e;letter-spacing:0px">GOMME</div>
<div class="a" style="left:1191.9px;top:508px;width:38.5px;height:36.5px;border:1px solid #2a2a2a;border-radius:4px;background:#222222"></div>
<svg class="a" style="left:1204.4px;top:514px" width="14" height="14" viewBox="0 0 14 14"><path d="M4 6.5C6 3.5 10 3.5 12 7.5" fill="none" stroke="#8a8a8a" stroke-width="1.5"/><path d="M2 4.5L4.5 8.5L6.5 4.5Z" fill="#8a8a8a"/></svg>
<div class="t" style="left:1191.9px;width:38.5px;text-align:center;top:532px;font-size:6.5px;font-weight:bold;font-family:'Liberation Mono';color:#5e5e5e;letter-spacing:0px">ANNULER</div>
<div class="a" style="left:1234.2px;top:508px;width:38.5px;height:36.5px;border:1px solid #2a2a2a;border-radius:4px;background:#222222"></div>
<svg class="a" style="left:1246.7px;top:514px" width="14" height="14" viewBox="0 0 14 14"><rect x="3.5" y="3.5" width="7" height="9" rx="1" fill="#8a8a8a"/><rect x="2.5" y="2" width="9" height="1.4" fill="#8a8a8a"/><rect x="5.5" y="0.8" width="3" height="1.4" fill="#8a8a8a"/></svg>
<div class="t" style="left:1234.2px;width:38.5px;text-align:center;top:532px;font-size:6.5px;font-weight:bold;font-family:'Liberation Mono';color:#5e5e5e;letter-spacing:0px">EFFACER</div>
<div class="t" style="left:1065px;top:551px;font-size:7px;font-family:'Liberation Mono';color:#363636;letter-spacing:2.0px">FORMES</div>
<div class="a" style="left:1065.5px;top:565px;width:25.5px;height:26.5px;border:1px solid #2c2c2c;border-radius:3.5px;background:#1e1e1e"></div>
<svg class="a" style="left:1071.25px;top:571.2px" width="14" height="14" viewBox="0 0 14 14"><rect x="2.5" y="3.5" width="9" height="7" rx="0.5" fill="none" stroke="#8c8c8c" stroke-width="1.2"/></svg>
<div class="a" style="left:1094.8px;top:565px;width:25.5px;height:26.5px;border:1px solid #2c2c2c;border-radius:3.5px;background:#1e1e1e"></div>
<svg class="a" style="left:1100.55px;top:571.2px" width="14" height="14" viewBox="0 0 14 14"><ellipse cx="7" cy="7" rx="5" ry="3.5" fill="none" stroke="#8c8c8c" stroke-width="1.2"/></svg>
<div class="a" style="left:1124.1px;top:565px;width:25.5px;height:26.5px;border:1px solid #2c2c2c;border-radius:3.5px;background:#1e1e1e"></div>
<svg class="a" style="left:1129.85px;top:571.2px" width="14" height="14" viewBox="0 0 14 14"><path d="M2.5 11.5L11 3M5.5 3H11V8.5" fill="none" stroke="#8c8c8c" stroke-width="1.2"/></svg>
<div class="a" style="left:1153.4px;top:565px;width:25.5px;height:26.5px;border:1px solid #2c2c2c;border-radius:3.5px;background:#1e1e1e"></div>
<svg class="a" style="left:1159.15px;top:571.2px" width="14" height="14" viewBox="0 0 14 14"><path d="M7 2.5L12 11.5H2Z" fill="none" stroke="#8c8c8c" stroke-width="1.2" stroke-linejoin="round"/></svg>
<div class="a" style="left:1182.7px;top:565px;width:25.5px;height:26.5px;border:1px solid #2c2c2c;border-radius:3.5px;background:#1e1e1e"></div>
<svg class="a" style="left:1188.45px;top:571.2px" width="14" height="14" viewBox="0 0 14 14"><path d="M7 1.8L8.5 5.2L12.2 5.5L9.4 7.9L10.2 11.6L7 9.7L3.8 11.6L4.6 7.9L1.8 5.5L5.5 5.2Z" fill="none" stroke="#8c8c8c" stroke-width="1.1" stroke-linejoin="round"/></svg>
<div class="t" style="left:1065px;top:598.5px;font-size:7px;font-family:'Liberation Mono';color:#363636;letter-spacing:2.0px">TAILLE —</div>
<div class="t" style="left:1116px;top:598px;font-size:8px;font-weight:bold;font-family:'Liberation Mono';color:#e2f05a;letter-spacing:0.6px">5PX</div>
<div class="a" style="left:1065.5px;top:616.5px;width:3px;height:3px;border-radius:50%;background:#5a5a5a"></div>
<div class="a" style="left:1076px;top:617px;width:178px;height:2px;border-radius:1px;background:#6e6e6e"></div>
<div class="a" style="left:1076px;top:617px;width:18px;height:2px;border-radius:1px;background:#e8eea0"></div>
<div class="a" style="left:1089px;top:612.5px;width:11px;height:11px;border-radius:50%;background:#eef230"></div>
<div class="a" style="left:1260.5px;top:612px;width:12.5px;height:12.5px;border-radius:50%;background:#5a5a5a"></div>
<div class="a" style="left:1065px;top:631.5px;width:208px;height:28px;border:1px solid #2e2e2e;border-radius:4px;background:#1c1c1c"></div>
<div class="a" style="left:1117px;top:640.5px;width:11px;height:11px;border-radius:2px;background:linear-gradient(#5ec8f5,#1f8fd0)"></div>
<svg class="a" style="left:1118px;top:641.5px" width="9" height="9" viewBox="0 0 9 9"><path d="M1.5 2.5L4.2 4.5L1.5 6.5ZM4.2 2.5L6.9 4.5L4.2 6.5Z" fill="#fff"/><rect x="7" y="2.5" width=".9" height="4" fill="#fff"/></svg>
<div class="t" style="left:1133px;top:641px;font-size:11px;font-weight:bold;color:#9a9a9a;transform-origin:0 0;transform:scaleX(0.7);letter-spacing:1.1px">PASSER LA MANCHE</div>
<div class="t" style="left:1092px;top:673.5px;font-size:9.85px;font-family:'Liberation Mono';color:#2c2c2c">built for ninha - by kaido</div>

<!-- taskbar -->
<div class="a" style="left:0;top:689px;width:1280px;height:31px;background:linear-gradient(90deg,#241a20,#2a1a1c 40%,#361a18 75%,#3a1b17)"></div>
<div class="a" style="left:0;top:689px;width:1280px;height:1px;background:#3a2a2a"></div>

<div class="a" style="left:845px;top:652px;width:30.5px;height:27px;border:1px solid #2a2a2a;border-radius:13.5px;background:#1a1a1a"></div>
<div class="t" style="left:845px;width:30.5px;text-align:center;top:661px;font-size:8.5px;font-weight:bold;color:#b0b0b0;letter-spacing:0.2px;transform-origin:50% 0;transform:scaleX(0.82)">+10s</div>
<div class="a" style="left:879.5px;top:652px;width:32px;height:27px;border:1px solid #2a2a2a;border-radius:13.5px;background:#1a1a1a"></div>
<div class="t" style="left:879.5px;width:32px;text-align:center;top:661px;font-size:8.5px;font-weight:bold;color:#b0b0b0;letter-spacing:0.2px;transform-origin:50% 0;transform:scaleX(0.82)">+30s</div>
<div class="a" style="left:916px;top:652px;width:32.5px;height:27px;border:1px solid #2a2a2a;border-radius:13.5px;background:#1a1a1a"></div>
<div class="t" style="left:916px;width:32.5px;text-align:center;top:661px;font-size:8.5px;font-weight:bold;color:#b0b0b0;letter-spacing:0.2px;transform-origin:50% 0;transform:scaleX(0.82)">+60s</div>
<div class="a" style="left:953px;top:652px;width:27px;height:27px;border:1px solid #2a2a2a;border-radius:50%;background:#1a1a1a"></div>
<svg class="a" style="left:962px;top:659.5px" width="10" height="13" viewBox="0 0 13 17"><path d="M6.5 1C3.5 1 1.6 3.2 1.6 5.8C1.6 8 3.3 9.3 3.9 10.8L4.2 12.2H8.8L9.1 10.8C9.7 9.3 11.4 8 11.4 5.8C11.4 3.2 9.5 1 6.5 1Z" fill="#f8d33a"/><rect x="4.3" y="12.6" width="4.4" height="2.2" rx=".8" fill="#c8c8c8"/><rect x="5" y="15" width="3" height="1" fill="#999"/></svg>
<div class="a" style="left:985.5px;top:652px;width:27px;height:27px;border:1px solid #2a2a2a;border-radius:50%;background:#1a1a1a"></div>
<svg class="a" style="left:993.5px;top:662px" width="11.5" height="8" viewBox="0 0 15 11"><path d="M1 5.5C3 2.5 5 1.5 7.5 1.5C10 1.5 12 2.5 14 5.5C12 8.5 10 9.5 7.5 9.5C5 9.5 3 8.5 1 5.5Z" fill="none" stroke="#9a9a9a" stroke-width="1.1"/><circle cx="7.5" cy="5.5" r="1.8" fill="#9a9a9a"/><path d="M2 7.5H13" stroke="#9a9a9a" stroke-width=".8"/></svg>
<div class="a" style="left:1017.5px;top:652px;width:27px;height:27px;border:1px solid #333;border-radius:50%;background:#050505"></div>
<div class="a" style="left:1025.5px;top:660px;width:11px;height:11px;border-radius:1.5px;background:#2aa7e0"></div>
<div class="a" style="left:1028.8px;top:662.5px;width:1.6px;height:6px;background:#e8f6ff"></div>
<div class="a" style="left:1031.8px;top:662.5px;width:1.6px;height:6px;background:#e8f6ff"></div>
<svg class="a" style="left:8px;top:694px" width="22" height="20" viewBox="0 0 22 20"><circle cx="9" cy="7" r="4" fill="#f5a623"/><path d="M4 16C1.5 16 1 12.5 3.5 11.8C4 8.5 8.5 8 10 10.5C12.5 9.5 15.5 10.5 15.5 13.5C17.5 13.5 18 16 16 16Z" fill="#dfe6f0"/></svg>
<div class="t" style="left:34px;top:697px;font-size:8px;font-weight:bold;color:#f0f0f0">24°C</div>
<div class="t" style="left:34px;top:707.5px;font-size:8px;color:#e8e8e8">Ciel couvert</div>
<svg class="a" style="left:397px;top:697px" width="17" height="17" viewBox="0 0 17 17"><rect x="0" y="0" width="8" height="8" fill="#47b8f0"/><rect x="9" y="0" width="8" height="8" fill="#47b8f0"/><rect x="0" y="9" width="8" height="8" fill="#3aa6e6"/><rect x="9" y="9" width="8" height="8" fill="#3aa6e6"/></svg>
<div class="a" style="left:421.5px;top:694px;width:146px;height:23px;border-radius:11.5px;background:#3a2d2c;border:1px solid #4a3a38"></div>
<svg class="a" style="left:428.5px;top:699px" width="12" height="12" viewBox="0 0 12 12"><circle cx="5" cy="5" r="3.6" fill="none" stroke="#e8e8e8" stroke-width="1.3"/><path d="M7.7 7.7L11 11" stroke="#e8e8e8" stroke-width="1.4"/></svg>
<div class="t" style="left:446px;top:702px;font-size:9px;color:#e6e6e6">Rechercher</div>
<svg class="a" style="left:532px;top:697px" width="34" height="17" viewBox="0 0 34 17"><path d="M1 14C6 11 9 6 14 5C18 4 22 8 26 6C29 5 31 8 33 12L30 15H3Z" fill="#9aa050"/><path d="M6 12C10 10 14 9 17 10C20 11 23 9 27 10" stroke="#e8e0a0" stroke-width="1.5" fill="none"/></svg>
<div class="a" style="left:576px;top:701px;width:12px;height:11px;background:#7a7a7a;border-radius:1px"></div>
<div class="a" style="left:581px;top:698px;width:12px;height:11px;background:#e0e0e0;border-radius:1px"></div>
<svg class="a" style="left:605px;top:697px" width="18" height="17" viewBox="0 0 18 17"><path d="M2 3C2 1.5 3 1 4.5 1H8L6 12H2Z" fill="#3b8cf5"/><path d="M8 1H13C15 1 16 2 16 3.5V10H10Z" fill="#c04fe0"/><path d="M6 6H12L10 12H4Z" fill="#f06a8a"/></svg>
<div class="t" style="left:606px;top:711px;font-size:4px;font-weight:bold;color:#ddd">PC365</div>
<svg class="a" style="left:634px;top:698px" width="18" height="15" viewBox="0 0 18 15"><path d="M1 2C1 1.4 1.4 1 2 1H7L8.5 2.5H16C16.6 2.5 17 2.9 17 3.5V13C17 13.6 16.6 14 16 14H2C1.4 14 1 13.6 1 13Z" fill="#f5c242"/><rect x="1" y="5" width="16" height="9" rx="1" fill="#fbd55a"/><rect x="4" y="11" width="10" height="3" fill="#3a8ee8"/></svg>
<div class="a" style="left:664.5px;top:697px;width:16px;height:16px;border-radius:3px;background:#0c0a3c"></div>
<div class="t" style="left:667px;top:701.5px;font-size:8px;font-weight:bold;color:#b8a8ff">Pr</div>
<svg class="a" style="left:693.5px;top:697px" width="17" height="17" viewBox="0 0 17 17"><circle cx="8.5" cy="8.5" r="7.5" fill="#302a2a" stroke="#d8d8d8" stroke-width="1.3"/><circle cx="8.5" cy="5.5" r="2" fill="#d8d8d8"/><circle cx="5.8" cy="10" r="2" fill="#d8d8d8"/><circle cx="11.2" cy="10" r="2" fill="#d8d8d8"/><circle cx="14" cy="3" r="3" fill="#e81818"/></svg>
<div class="a" style="left:698.5px;top:716px;width:6px;height:1.5px;border-radius:1px;background:#9a8a8a"></div>
<svg class="a" style="left:722.5px;top:697px" width="18" height="18" viewBox="0 0 18 18"><circle cx="9" cy="9" r="8" fill="#e5412f"/><path d="M9 9L2.1 5A8 8 0 0 0 9 17Z" fill="#34a853"/><path d="M9 9L9 17A8 8 0 0 0 15.9 5Z" fill="#fbbc05"/><circle cx="9" cy="9" r="3.8" fill="#fff"/><circle cx="9" cy="9" r="2.9" fill="#4285f4"/><circle cx="14" cy="3" r="3" fill="#2a2020" stroke="#ddd" stroke-width=".6"/></svg>
<div class="a" style="left:728.5px;top:716px;width:6px;height:1.5px;border-radius:1px;background:#9a8a8a"></div>
<svg class="a" style="left:752.5px;top:697px" width="16" height="16" viewBox="0 0 16 16"><circle cx="8" cy="8" r="7.5" fill="#1c3a6a"/><circle cx="10.5" cy="6" r="2.6" fill="none" stroke="#e8eef8" stroke-width="1.2"/><path d="M1 9.5L7 12L10 7" stroke="#e8eef8" stroke-width="1.6" fill="none"/></svg>
<svg class="a" style="left:782px;top:697px" width="16" height="16" viewBox="0 0 16 16"><circle cx="8" cy="8" r="8" fill="#050505"/><path d="M8.5 3.5V10A2 2 0 1 1 6.5 8M8.5 3.5C9 5 10 6 11.5 6" stroke="#fff" stroke-width="1.4" fill="none"/></svg>
<svg class="a" style="left:812.5px;top:697px" width="15" height="17" viewBox="0 0 15 17"><path d="M3 1H13L12 9C11.5 13 9 16 2 16L3.5 9C4 5 3.5 3 3 1Z" fill="#1aa8a0"/><path d="M10.5 3.5C7.5 3.5 6.5 6 8 8.5C9.5 11 8 13.5 5 13.5" stroke="#eafffa" stroke-width="1.6" fill="none"/></svg>
<svg class="a" style="left:841px;top:697px" width="16" height="16" viewBox="0 0 16 16"><circle cx="8" cy="8" r="8" fill="#1ed760"/><path d="M3.5 5.8C6.5 4.8 9.8 5 12.5 6.5M4 8.3C6.5 7.6 9.2 7.8 11.5 9M4.5 10.6C6.5 10 8.6 10.2 10.5 11.2" stroke="#101010" stroke-width="1.2" fill="none" stroke-linecap="round"/></svg>
<div class="a" style="left:846px;top:716px;width:6px;height:1.5px;border-radius:1px;background:#9a8a8a"></div>
<div class="a" style="left:864px;top:692px;width:28px;height:27px;border-radius:4px;background:#4a3230"></div>
<div class="a" style="left:869px;top:697px;width:18px;height:17px;border-radius:2px;background:#0e2a14"></div>
<svg class="a" style="left:870px;top:697px" width="16" height="10" viewBox="0 0 16 10"><path d="M2 8L6 3L9 6L13 1L14 6Z" fill="#46c43a"/></svg>
<div class="t" style="left:870px;top:707px;font-size:6px;font-weight:bold;color:#e8f8e8">KPP</div>
<div class="a" style="left:873px;top:716.5px;width:10px;height:2px;border-radius:1px;background:#e0a0c0"></div>
<svg class="a" style="left:1076px;top:702px" width="9" height="6" viewBox="0 0 9 6"><path d="M1 5L4.5 1.5L8 5" stroke="#eee" stroke-width="1.2" fill="none"/></svg>
<svg class="a" style="left:1095px;top:698px" width="13" height="14" viewBox="0 0 13 14"><path d="M2 6A4.5 4.5 0 0 1 10.5 4.5M11 8A4.5 4.5 0 0 1 2.5 9.5" stroke="#e8e8e8" stroke-width="1.3" fill="none"/><path d="M10.5 1.5V5H7" stroke="#e8e8e8" stroke-width="1.2" fill="none"/><circle cx="9" cy="10.5" r="2.5" fill="#f5a020"/></svg>
<svg class="a" style="left:1117px;top:700px" width="13" height="10" viewBox="0 0 13 10"><path d="M3 9C0.5 9 0.5 5.5 3 5.5C3.5 2 8.5 1.5 9.5 4.5C12 4.5 12.5 9 10 9Z" fill="#888"/><path d="M1 1L12 9.5" stroke="#333" stroke-width="1"/></svg>
<svg class="a" style="left:1140px;top:699px" width="9" height="13" viewBox="0 0 9 13"><rect x="2.5" y="0.5" width="4" height="7.5" rx="2" fill="#9a7ab8"/><path d="M1 6A3.5 3.5 0 0 0 8 6M4.5 9.5V12" stroke="#9a7ab8" stroke-width="1" fill="none"/></svg>
<div class="t" style="left:1161.5px;top:702px;font-size:8px;color:#eee">ENG</div>
<svg class="a" style="left:1190px;top:700px" width="11" height="9" viewBox="0 0 11 9"><path d="M1 3.5A6.5 6.5 0 0 1 10 3.5M2.5 5.2A4.3 4.3 0 0 1 8.5 5.2M4 6.9A2 2 0 0 1 7 6.9" stroke="#eee" stroke-width="1" fill="none"/><circle cx="5.5" cy="8" r=".8" fill="#eee"/></svg>
<svg class="a" style="left:1205px;top:699px" width="13" height="11" viewBox="0 0 13 11"><path d="M1 4H3.5L6.5 1.5V9.5L3.5 7H1Z" fill="none" stroke="#eee" stroke-width="1"/><path d="M8.5 3.5A3 3 0 0 1 8.5 7.5M10 2A5 5 0 0 1 10 9" stroke="#eee" stroke-width="1" fill="none"/></svg>
<div class="t" style="left:1249.5px;top:697px;font-size:8px;color:#eee">04:21</div>
<div class="t" style="left:1228px;top:707px;font-size:8px;color:#eee">18/04/2026</div>
</body></html>
